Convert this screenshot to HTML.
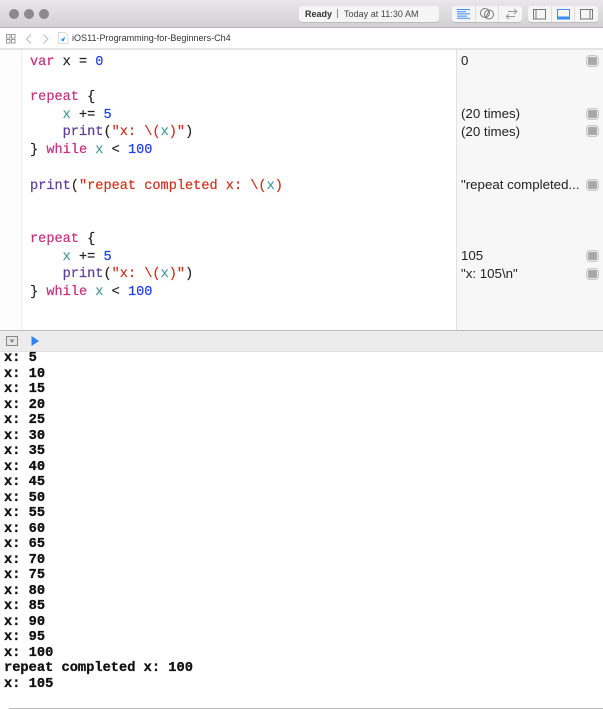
<!DOCTYPE html>
<html><head><meta charset="utf-8"><style>
html,body{margin:0;padding:0;background:#fff}
#r{position:relative;width:603px;height:709px;overflow:hidden;background:#fff;font-family:"Liberation Sans",sans-serif}
.a{position:absolute}
.l{position:absolute;left:30px;font:13.6px/18px "Liberation Mono",monospace;white-space:pre;color:#222;-webkit-text-stroke:.2px}
.k{color:#c4307f}.n{color:#1c3df0}.v{color:#4d9a9f}.f{color:#5c3d99}.s{color:#d12f1b}
.o{position:absolute;left:461px;font-size:13.3px;line-height:18px;color:#222;white-space:pre}
.b{position:absolute;left:586px;width:13px;height:12px;box-sizing:border-box;background:#a8a8a8;border:1px solid #c8c8c8;box-shadow:inset 0 0 0 1px #ececec;border-radius:4px}
#c{position:absolute;left:4px;top:351px;font:bold 13.7px/15.5px "Liberation Mono",monospace;color:#111;white-space:pre;-webkit-text-stroke:.3px}
</style></head><body><div id="r">
<div class="a" style="left:0;top:0;width:603px;height:27px;background:linear-gradient(#e9e7e9,#d2d0d2);border-bottom:1px solid #b5b3b5"></div>
<div class="a" style="left:9px;top:9px;width:10px;height:10px;border-radius:50%;background:#8b898b"></div>
<div class="a" style="left:24px;top:9px;width:10px;height:10px;border-radius:50%;background:#8b898b"></div>
<div class="a" style="left:39px;top:9px;width:10px;height:10px;border-radius:50%;background:#8b898b"></div>
<div class="a" style="left:299px;top:6px;width:140px;height:16px;background:#f6f5f6;border-radius:3px;box-shadow:0 1px 0 #bbb"></div>
<div class="a" style="left:305px;top:8px;font-size:9px;line-height:12px;font-weight:bold;color:#333">Ready</div>
<div class="a" style="left:337px;top:9px;width:1px;height:9px;background:#888"></div>
<div class="a" style="left:344px;top:8px;font-size:9px;line-height:12px;color:#444;letter-spacing:.04px">Today at 11:30 AM</div>
<div class="a" style="left:452px;top:6px;width:70px;height:16px;background:#f6f5f6;border-radius:3px;box-shadow:0 1px 0 #bbb"></div>
<div class="a" style="left:528px;top:6px;width:70px;height:16px;background:#f6f5f6;border-radius:3px;box-shadow:0 1px 0 #bbb"></div>
<svg class="a" style="left:452px;top:6px" width="146" height="16" fill="none">
<path d="M23.5 0V16M46.5 0V16M99.5 0V16M122.5 0V16" stroke="#dedede"/>
<path d="M5 3H18V4H5ZM5 5.2H14V6.2H5ZM5 7.4H18V8.4H5ZM5 9.6H15V10.6H5ZM5 11.8H18V12.8H5Z" fill="#3d8bf7"/>
<circle cx="33" cy="7" r="4.5" stroke="#777"/><circle cx="37" cy="8.5" r="4.5" stroke="#777"/><path d="M34 11L37 5" stroke="#777"/>
<path d="M54 10.5H63M54 10.5L57 8M54 10.5L57 13M56 5.5H65M65 5.5L62 3M65 5.5L62 8" stroke="#999"/>
<rect x="81.5" y="3.5" width="12" height="9.5" stroke="#777"/><path d="M84 3.5V13" stroke="#777"/>
<rect x="105.5" y="3.5" width="12" height="9.5" stroke="#3e8df5"/><path d="M105 10.5H118V13.5H105Z" fill="#3e8df5"/>
<rect x="128.5" y="3.5" width="12" height="9.5" stroke="#777"/><path d="M138 3.5V13" stroke="#777"/>
</svg>
<svg class="a" style="left:6px;top:34px" width="50" height="12" fill="none">
<path d="M.5.5H4V4H.5ZM5.5.5H9V4H5.5ZM.5 5.5H4V9H.5ZM5.5 5.5H9V9H5.5Z" stroke="#999"/>
<path d="M25 .5L20.5 5L25 9.5M37.5 .5L42 5L37.5 9.5" stroke="#bbb"/>
</svg>
<svg class="a" style="left:58px;top:32px" width="11" height="12"><path d="M.5.5H7L10 3.5V11.5H.5Z" fill="#fff" stroke="#ddd"/><path d="M2.5 8L7.5 4.5L5.5 9.5Z" fill="#2f9be8"/></svg>
<div class="a" style="left:72px;top:32px;font-size:9.05px;line-height:13px;color:#333">iOS11-Programming-for-Beginners-Ch4</div>
<div class="a" style="left:0;top:48px;width:603px;height:2px;background:#e4e4e4"></div>
<div class="a" style="left:0;top:50px;width:21px;height:280px;background:#fdfdfd;border-right:1px solid #ececec"></div>
<div class="a" style="left:456px;top:50px;width:147px;height:280px;background:#f7f7f7;border-left:1px solid #e2e2e2"></div>

<div class="l" style="top:54px"><span class="k">var</span> x = <span class="n">0</span></div>
<div class="l" style="top:89px"><span class="k">repeat</span> {</div>
<div class="l" style="top:107px">    <span class="v">x</span> += <span class="n">5</span></div>
<div class="l" style="top:124px">    <span class="f">print</span>(<span class="s">"x: \(</span><span class="v">x</span><span class="s">)"</span>)</div>
<div class="l" style="top:142px">} <span class="k">while</span> <span class="v">x</span> &lt; <span class="n">100</span></div>
<div class="l" style="top:178px"><span class="f">print</span>(<span class="s">"repeat completed x: \(</span><span class="v">x</span><span class="s">)</span></div>
<div class="l" style="top:231px"><span class="k">repeat</span> {</div>
<div class="l" style="top:249px">    <span class="v">x</span> += <span class="n">5</span></div>
<div class="l" style="top:266px">    <span class="f">print</span>(<span class="s">"x: \(</span><span class="v">x</span><span class="s">)"</span>)</div>
<div class="l" style="top:284px">} <span class="k">while</span> <span class="v">x</span> &lt; <span class="n">100</span></div>

<div class="o" style="top:52px">0</div>
<div class="o" style="top:105px">(20 times)</div>
<div class="o" style="top:123px">(20 times)</div>
<div class="o" style="top:176px">"repeat completed...</div>
<div class="o" style="top:247px">105</div>
<div class="o" style="top:265px">"x: 105\n"</div>
<div class="b" style="top:55px"></div><div class="b" style="top:108px"></div><div class="b" style="top:125px"></div><div class="b" style="top:179px"></div><div class="b" style="top:250px"></div><div class="b" style="top:268px"></div>

<div class="a" style="left:0;top:330px;width:603px;height:20px;background:#ececec;border-top:1px solid #bdbdbd;border-bottom:1px solid #e0e0e0"></div>
<svg class="a" style="left:6px;top:336px" width="34" height="11" fill="none"><rect x=".5" y=".5" width="11" height="9" fill="#e6e6e6" stroke="#888"/><path d="M3.5 3.5H8.5L6 7Z" fill="#888"/><path d="M25.5 0L33 5L25.5 10Z" fill="#2a82f6"/></svg>
<div id="c">x: 5
x: 10
x: 15
x: 20
x: 25
x: 30
x: 35
x: 40
x: 45
x: 50
x: 55
x: 60
x: 65
x: 70
x: 75
x: 80
x: 85
x: 90
x: 95
x: 100
repeat completed x: 100
x: 105</div>
<div class="a" style="left:9px;top:708px;width:594px;height:1px;background:#bbb"></div>
</div></body></html>
